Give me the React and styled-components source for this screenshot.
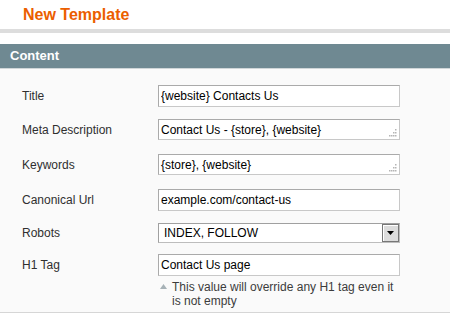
import React from "react";
import styled, { createGlobalStyle } from "styled-components";

const Global = createGlobalStyle`
  html, body { margin: 0; padding: 0; background: #fff; }
  body { font-family: "Liberation Sans", Arial, sans-serif; font-size: 12px; color: #2f2f2f; }
`;

const Page = styled.div`
  width: 450px;
`;

const PageHeader = styled.h3`
  margin: 0 0 11px;
  padding: 5px 0 0 23px;
  height: 24px;
  box-sizing: content-box;
  border-bottom: 4px solid #dddddd;
  font-size: 16px;
  line-height: 19px;
  font-weight: bold;
  color: #eb5e00;
`;

const SectionHead = styled.div`
  height: 24px;
  line-height: 24px;
  padding-left: 10px;
  background: #6f8992;
  border-bottom: 1px solid #d0d6d8;
  color: #fff;
  font-weight: bold;
  font-size: 13px;
`;

const Fieldset = styled.div`
  background: #fafafa;
  border-bottom: 1px solid #d6d6d6;
  padding: 16px 0 4px 22px;
  display: flex;
  flex-direction: column;
`;

const Row = styled.div`
  display: grid;
  grid-template-columns: 136px 242px;
  align-items: start;
  height: ${(p) => (p.$h ? `${p.$h}px` : "auto")};
`;

const Label = styled.label`
  line-height: ${(p) => p.$lh || 22}px;
  color: #2f2f2f;
  white-space: nowrap;
`;

const fieldBase = `
  box-sizing: border-box;
  width: 242px;
  margin: 0;
  border: 1px solid;
  border-color: #aaa #c8c8c8 #c8c8c8 #aaa;
  background: #fff;
  font-family: "Liberation Sans", Arial, sans-serif;
  font-size: 12px;
  color: #000;
  outline: none;
`;

const TextInput = styled.input`
  ${fieldBase}
  height: 22px;
  padding: 0 2px;
`;

const AreaWrap = styled.div`
  position: relative;
  width: 242px;
  height: 21px;
`;

const TextArea = styled.textarea`
  ${fieldBase}
  display: block;
  height: 21px;
  padding: 3px 2px 0;
  resize: none;
  overflow: hidden;
  line-height: normal;
`;

const Grip = styled.svg`
  position: absolute;
  right: 3px;
  bottom: 3px;
`;

const SelectBox = styled.div`
  box-sizing: border-box;
  width: 242px;
  height: 20px;
  border: 1px solid;
  border-color: #a0a0a0 #bdbdbd #bdbdbd #a0a0a0;
  background: #fff;
  display: flex;
  align-items: center;
  justify-content: space-between;
  color: #000;
`;

const SelectText = styled.span`
  padding-left: 5px;
  line-height: 18px;
`;

const SelectButton = styled.span`
  box-sizing: border-box;
  width: 17px;
  height: 18px;
  border: 1px solid #777;
  box-shadow: inset 1px 1px 0 #fff;
  background: #dcdcdc;
  display: flex;
  align-items: center;
  justify-content: center;
`;

const ValueCol = styled.div`
  display: flex;
  flex-direction: column;
`;

const Note = styled.p`
  position: relative;
  margin: 4px 0 0;
  padding-left: 14px;
  line-height: 14px;
  color: #3c3c3c;
`;

const NoteMark = styled.svg`
  position: absolute;
  left: 2px;
  top: 4px;
`;

const GripIcon = () => (
  <Grip width="8" height="8" viewBox="0 0 8 8">
    {[
      [6, 0],
      [4, 3],
      [6, 3],
      [0, 6],
      [2, 6],
      [4, 6],
      [6, 6],
    ].map(([x, y], i) => (
      <rect key={i} x={x} y={y} width="1.5" height="1.5" fill="#b5b5b5" />
    ))}
  </Grip>
);

const Area = ({ value }) => (
  <AreaWrap>
    <TextArea readOnly value={value} />
    <GripIcon />
  </AreaWrap>
);

export default function App() {
  return (
    <Page>
      <Global />
      <PageHeader>New Template</PageHeader>
      <SectionHead>Content</SectionHead>
      <Fieldset>
        <Row $h={34}>
          <Label>Title</Label>
          <TextInput readOnly value="{website} Contacts Us" />
        </Row>
        <Row $h={35}>
          <Label>Meta Description</Label>
          <Area value="Contact Us - {store}, {website}" />
        </Row>
        <Row $h={35}>
          <Label>Keywords</Label>
          <Area value="{store}, {website}" />
        </Row>
        <Row $h={34}>
          <Label>Canonical Url</Label>
          <TextInput readOnly value="example.com/contact-us" />
        </Row>
        <Row $h={31}>
          <Label $lh={20}>Robots</Label>
          <SelectBox>
            <SelectText>INDEX, FOLLOW</SelectText>
            <SelectButton>
              <svg width="7" height="4" viewBox="0 0 7 4">
                <path d="M0 0H7L3.5 4Z" fill="#000" />
              </svg>
            </SelectButton>
          </SelectBox>
        </Row>
        <Row>
          <Label>H1 Tag</Label>
          <ValueCol>
            <TextInput readOnly value="Contact Us page" />
            <Note>
              <NoteMark width="7" height="5" viewBox="0 0 7 5">
                <path d="M3.5 0L7 5H0Z" fill="#a7b2b7" />
              </NoteMark>
              This value will override any H1 tag even it is not empty
            </Note>
          </ValueCol>
        </Row>
      </Fieldset>
    </Page>
  );
}
